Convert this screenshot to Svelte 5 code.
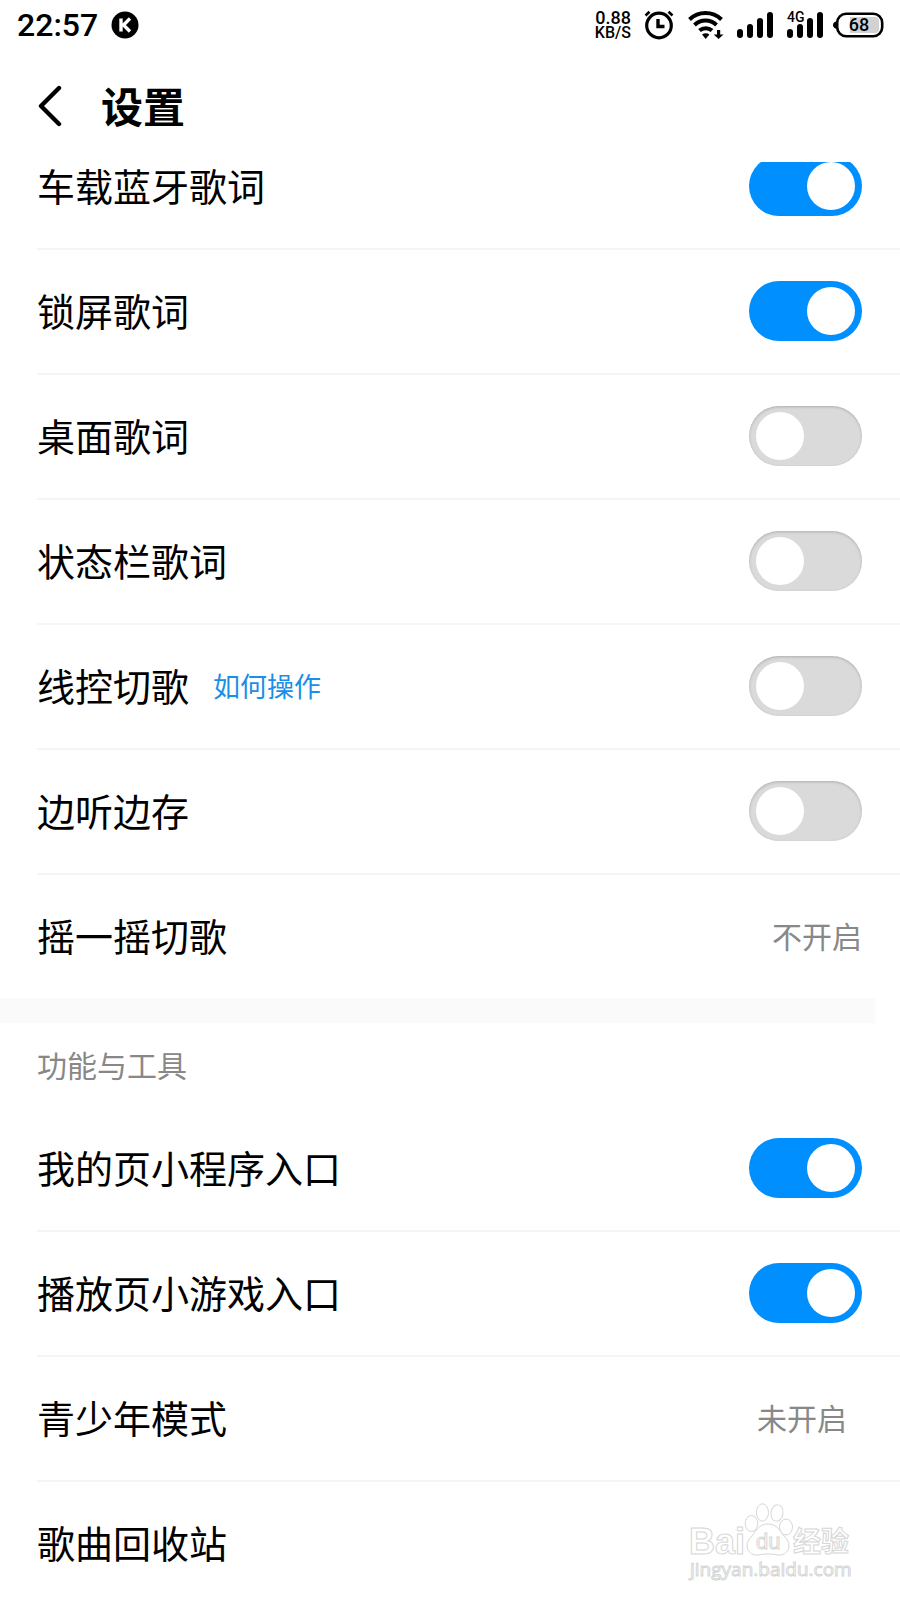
<script lang="ts">
  type Item = {
    id: string;
    label: string;
    on?: boolean;
    value?: string;
    help?: string;
    indent?: boolean;
  };

  let lyrics: Item[] = $state([
    { id: 'bluetooth', label: '车载蓝牙歌词', on: true },
    { id: 'lockscreen', label: '锁屏歌词', on: true },
    { id: 'desktop', label: '桌面歌词', on: false },
    { id: 'statusbar', label: '状态栏歌词', on: false },
    { id: 'wire', label: '线控切歌', on: false, help: '如何操作' },
    { id: 'cache', label: '边听边存', on: false },
    { id: 'shake', label: '摇一摇切歌', value: '不开启' },
  ]);

  let tools: Item[] = $state([
    { id: 'miniapp', label: '我的页小程序入口', on: true },
    { id: 'minigame', label: '播放页小游戏入口', on: true },
    { id: 'teen', label: '青少年模式', value: '未开启', indent: true },
    { id: 'recycle', label: '歌曲回收站' },
  ]);
</script>

{#snippet row(item: Item)}
  <li class="item">
    {#if item.on !== undefined}
      <div class="row">
        <label class="label" for={item.id}>{item.label}</label>
        {#if item.help}
          <a class="help" href="#help">{item.help}</a>
        {/if}
        <input class="switch" id={item.id} type="checkbox" bind:checked={item.on} />
      </div>
    {:else}
      <button class="row">
        <span class="label">{item.label}</span>
        {#if item.value}
          <span class="value" class:indent={item.indent}>{item.value}</span>
        {/if}
      </button>
    {/if}
  </li>
{/snippet}

{#snippet bars()}
  <rect x="1" y="19" width="6" height="9" rx="3" />
  <rect x="11" y="14" width="6" height="14" rx="3" />
  <rect x="21" y="8" width="6" height="20" rx="3" />
  <rect x="31" y="2" width="6" height="26" rx="3" />
{/snippet}

<div class="screen">
  <div class="status">
    <span class="time">22:57</span>
    <svg class="badge" width="28" height="28" viewBox="0 0 28 28">
      <circle cx="14" cy="14" r="13.5" fill="#000" />
      <path d="M10 7.5v13M19 7.5l-6.5 6.5 6.5 6.5" fill="none" stroke="#fff" stroke-width="3.4" />
    </svg>
    <div class="speed">
      <span class="rate">0.88</span>
      <span class="unit">KB/S</span>
    </div>
    <svg class="clock" width="30" height="30" viewBox="0 0 30 30" fill="none" stroke="#000">
      <circle cx="15" cy="15.5" r="12.3" stroke-width="3.2" />
      <path d="M14 9v7.5h6.5" stroke-width="3.4" />
      <path d="M1.5 5.5l4-3.8M28.5 5.5l-4-3.8" stroke-width="2.6" />
    </svg>
    <svg class="wifi" width="36" height="30" viewBox="0 0 36 30">
      <g fill="none" stroke="#000" stroke-width="4">
        <path d="M1.5 9.5a23 23 0 0 1 32 0" />
        <path d="M6.5 15a16 16 0 0 1 22 0" />
        <path d="M11.5 20.5a9.5 9.5 0 0 1 12.5 0" />
      </g>
      <path d="M14 24.5q3.7-2.5 7.4 0l-3.7 4.5z" />
      <path d="M29 20h3.2v4.500h3.300l-4.900 4.500-4.900-4.500h3.300z" />
    </svg>
    <svg class="signal" width="38" height="30" viewBox="0 0 38 30">
      {@render bars()}
    </svg>
    <svg class="signal" width="38" height="30" viewBox="0 0 38 30">
      <text x="1" y="12" font-size="14" font-weight="500">4G</text>
      {@render bars()}
    </svg>
    <svg class="battery" width="52" height="30" viewBox="0 0 52 30">
      <path d="M4 11v8q-4-1-4-4t4-4z" />
      <rect x="4.2" y="3.7" width="45" height="22.6" rx="9" fill="#fff" stroke="#000" stroke-width="2.6" />
      <path d="M17 7h25a4 4 0 0 1 4 4v8a4 4 0 0 1-4 4H17z" fill="#d2d2d2" />
      <text x="26" y="21" font-size="18" font-weight="500" text-anchor="middle">68</text>
    </svg>
  </div>

  <header class="header">
    <button class="back" aria-label="返回">
      <svg width="24" height="42" viewBox="0 0 24 42" fill="none" stroke="#000" stroke-width="4.4" stroke-linecap="round" stroke-linejoin="round">
        <path d="M21 3L3 21l18 18" />
      </svg>
    </button>
    <h1>设置</h1>
  </header>

  <main class="list">
    <ul class="group scrolled">
      {#each lyrics as item (item.id)}
        {@render row(item)}
      {/each}
    </ul>
    <div class="band"></div>
    <h2>功能与工具</h2>
    <ul class="group">
      {#each tools as item (item.id)}
        {@render row(item)}
      {/each}
    </ul>
  </main>

  <svg class="watermark" width="168" height="84" viewBox="0 0 168 84" fill="#fff" stroke="#d6d6d6">
    <ellipse cx="63.5" cy="23.5" rx="6.3" ry="8" />
    <ellipse cx="74.5" cy="12.5" rx="6" ry="8.7" />
    <ellipse cx="89" cy="13" rx="6" ry="8.2" transform="rotate(8 89 13)" />
    <ellipse cx="98" cy="27" rx="6.5" ry="8" />
    <path d="M80 24c10 0 12 8 17 13 8 8 3 19-7 18-4-1-7-1-10-1s-6 0-10 1c-10 1-15-10-7-18 5-5 7-13 17-13z" />
    <text class="wm-bai" x="1" y="54">Bai</text>
    <text class="wm-du" x="68" y="49">du</text>
    <text class="wm-cjk" x="105" y="52">经验</text>
    <text class="wm-url" x="2" y="76">jingyan.baidu.com</text>
  </svg>
</div>

<style>
  :global(body) {
    margin: 0;
    background: #fff;
  }

  .screen {
    position: relative;
    display: flex;
    flex-direction: column;
    height: 100vh;
    overflow: hidden;
    background: #fff;
    color: #000;
    font-family: Roboto, 'Noto Sans CJK SC', sans-serif;
  }

  button {
    border: none;
    background: none;
    color: inherit;
    font-family: inherit;
    cursor: pointer;
  }

  /* ─── Status bar ──────────────────────────────────── */
  .status {
    display: flex;
    flex-shrink: 0;
    align-items: center;
    height: 50px;
    padding: 0 15px 0 17px;
  }
  .time {
    font-size: 32px;
    font-weight: 500;
    line-height: 50px;
  }
  .badge {
    margin-left: 13px;
  }
  .speed {
    display: flex;
    flex-direction: column;
    align-items: flex-end;
    margin-left: auto;
    font-weight: 500;
    line-height: 15px;
  }
  .rate { font-size: 18px; }
  .unit { font-size: 16px; }
  .clock   { margin-left: 13px; }
  .wifi    { margin-left: 14px; }
  .signal  { margin-left: 12px; }
  .battery { margin-left: 9px; }

  /* ─── Header ──────────────────────────────────────── */
  .header {
    display: flex;
    flex-shrink: 0;
    align-items: center;
    gap: 39px;
    height: 112px;
    padding: 0 38px;
  }
  .back {
    display: flex;
    padding: 0;
  }
  h1 {
    margin: 0;
    padding-top: 6px;
    font-size: 42px;
    font-weight: 700;
    line-height: 56px;
  }

  /* ─── List ────────────────────────────────────────── */
  .list {
    flex: 1;
    min-height: 0;
    overflow: hidden;
  }
  .group {
    margin: 0;
    padding: 0;
    list-style: none;
  }
  .scrolled {
    margin-top: -37px;
  }
  .item {
    margin-left: 37px;
    border-bottom: 2px solid #f5f5f5;
  }
  .item:last-child {
    border-bottom: none;
  }
  .row {
    display: flex;
    align-items: center;
    width: 100%;
    height: 123px;
    padding: 0 38px 2px 0;
    box-sizing: border-box;
  }
  .label {
    padding-top: 4px;
    font-size: 38px;
    line-height: 50px;
  }
  .help {
    margin-left: 24px;
    padding-top: 4px;
    color: #1b8fe6;
    font-size: 27px;
    line-height: 40px;
    text-decoration: none;
  }
  .value {
    margin-left: auto;
    padding-top: 4px;
    color: #888;
    font-size: 30px;
    line-height: 40px;
  }
  .indent {
    margin-right: 15px;
  }
  .band {
    height: 25px;
    margin-right: 25px;
    background: #fafafa;
  }
  h2 {
    margin: 0;
    padding: 4px 37px 0;
    color: #888;
    font-size: 30px;
    font-weight: 400;
    line-height: 80px;
  }

  /* ─── Switch ──────────────────────────────────────── */
  .switch {
    display: flex;
    align-items: center;
    width: 113px;
    height: 60px;
    margin: 0 0 0 auto;
    padding: 0 7px;
    box-sizing: border-box;
    border-radius: 30px;
    background: #dadada;
    box-shadow: inset 0 1px 3px rgba(0, 0, 0, 0.2);
    appearance: none;
    cursor: pointer;
  }
  .switch::before {
    content: '';
    width: 48px;
    height: 48px;
    border-radius: 50%;
    background: #fff;
  }
  .switch:checked {
    justify-content: flex-end;
    background: #008fff;
    box-shadow: none;
  }

  /* ─── Watermark ───────────────────────────────────── */
  .watermark {
    position: absolute;
    right: 44px;
    bottom: 16px;
    pointer-events: none;
    font-family: 'Liberation Sans', sans-serif;
  }
  .wm-bai {
    font-size: 36px;
    font-weight: 700;
  }
  .wm-du {
    font-size: 22px;
  }
  .wm-cjk {
    font-family: 'Noto Sans CJK SC', sans-serif;
    font-size: 28px;
    font-weight: 700;
  }
  .wm-url {
    font-family: 'Open Sans', sans-serif;
    font-size: 19px;
  }
</style>
